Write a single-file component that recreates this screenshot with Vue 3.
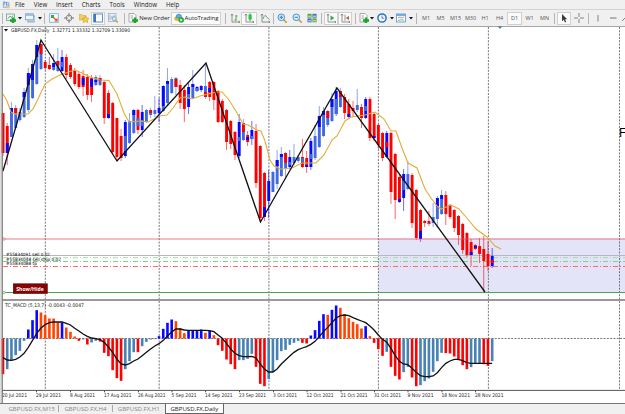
<script setup>
const STEP = 4.217
const ZERO = 338.5

const barX = (i) => 3 + i * STEP

const menus = ['File', 'View', 'Insert', 'Charts', 'Tools', 'Window', 'Help']

const axes = '<path d="M2 1V9H10M1 2.5L2 1L3 2.5M8.5 8L10 9L8.5 10" fill="none" stroke="#777" stroke-width=".8"/>'
const doc = '<path d="M1 .5H6L8 2.5V9H1Z" fill="#fff" stroke="#888" stroke-width=".7"/><path d="M2.5 3H5M2.5 5H5" stroke="#777" stroke-width=".7"/>'
const plus = '<path d="M7 4.5V10.5M4 7.5H10" stroke="#17a52b" stroke-width="2.4"/>'
const lens = '<path d="M6.5 6.5L9.8 9.8" stroke="#d1a139" stroke-width="1.7"/><circle cx="4.3" cy="4.3" r="3.3" fill="#d6edfb" stroke="#4a91cb"/>'

const icons = {
  newChart: '<rect x=".5" y="1" width="8" height="6.5" fill="#eaf3ee" stroke="#719e94" stroke-width=".8"/><path d="M2 5.5L4 3L5.5 4.5L7 2.5" fill="none" stroke="#499f55" stroke-width=".8"/>' + plus,
  profiles: '<rect x="2.8" y="3" width="7.5" height="6" fill="#b8d3eb" stroke="#7297b9" stroke-width=".7"/><rect x=".6" y=".8" width="7.8" height="6" fill="#edf5fc" stroke="#7297b9" stroke-width=".7"/><path d="M1 2H8" stroke="#75a7d5" stroke-width="1.3"/>',
  market: '<rect x=".7" y=".7" width="8.6" height="8.6" fill="#f8fcff" stroke="#75b8da" stroke-width=".9"/><path d="M2 2H5V5H2Z" fill="#3baa46"/><path d="M4 4L8 8M5.5 8H8V5.5" stroke="#e2592d" fill="none" stroke-width="1.2"/>',
  target: '<circle cx="5" cy="5" r="2.9" fill="none" stroke="#8b8b8b"/><path d="M5 0V3.8M5 6.2V10M0 5H3.8M6.2 5H10" stroke="#777"/>',
  navigator: '<path d="M0 1.5H3L4 2.5H7V7H0Z" fill="#f2ce62" stroke="#c79c30" stroke-width=".5"/><path d="M6.5 3L7.5 5.2L10 5.5L8.2 7.1L8.8 9.6L6.5 8.4L4.2 9.6L4.8 7.1L3 5.5L5.5 5.2Z" fill="#f8d32d" stroke="#bd9128" stroke-width=".5"/>',
  terminal: '<rect x=".7" y="1" width="8.8" height="8" fill="#fff" stroke="#4985c6" stroke-width=".9"/><rect x=".7" y="1" width="2.3" height="8" fill="#3c79c1"/><path d="M4 3H8M4 5H7" stroke="#ddd" stroke-width=".5"/>',
  tester: '<rect x=".5" y=".5" width="7.5" height="8" fill="#e8f0f7" stroke="#91a9bf" stroke-width=".7"/><path d="M2 2V7M4 3V6M6 2V5" stroke="#7799bb" stroke-width=".7"/><circle cx="6.2" cy="5.7" r="2" fill="#d3e9f7" stroke="#7895ab" stroke-width=".7"/><path d="M7.7 7.3L9.8 9.6" stroke="#c69f47" stroke-width="1.3"/>',
  order: doc + plus,
  auto: '<ellipse cx="4.6" cy="5.8" rx="4.4" ry="2.2" fill="#e8b62b"/><path d="M1.8 5Q1.8 1 4.8 1Q7.8 1 7.8 5Z" fill="#58aee0" stroke="#3786b5" stroke-width=".5"/><circle cx="7.2" cy="7" r="2.8" fill="#28a53a"/><path d="M6.3 5.5L8.8 7L6.3 8.5Z" fill="#fff"/>',
  bars: axes + '<path d="M6 2V8M6 3H7.5M4.5 7H6" stroke="#37a54b" stroke-width=".9" fill="none"/>',
  candles: axes + '<path d="M6 .3V8.2" stroke="#178c2c" stroke-width=".8"/><rect x="4.5" y="1.5" width="3.2" height="5" fill="#20c83a"/>',
  line: axes + '<path d="M3 6Q5 0 6.5 4L9.5 6.5" stroke="#57a566" stroke-width=".9" fill="none"/>',
  zoomIn: lens + '<path d="M4.3 2.6V6M2.6 4.3H6" stroke="#347dbb"/>',
  zoomOut: lens + '<path d="M2.6 4.3H6" stroke="#347dbb"/>',
  tile: '<path d="M.5 .8H4.6V4.7H.5Z" fill="#55a642"/><path d="M5.4 .8H9.6V4.7H5.4Z" fill="#4373bd"/><path d="M.5 5.4H4.6V9.3H.5Z" fill="#4373bd"/><path d="M5.4 5.4H9.6V9.3H5.4Z" fill="#55a642"/><path d="M1.2 3.2H4M6 3.2H9M1.2 7.8H4M6 7.8H9" stroke="#dcecd4"/>',
  scroll: axes + '<path d="M4.5 2.5L8.5 5L4.5 7.5Z" fill="#36ad49"/>',
  shift: axes + '<path d="M5 1.5V8" stroke="#6689a7" stroke-width=".8"/><path d="M9 3L5.7 5L9 7Z" fill="#c75936"/>',
  indicators: doc + plus,
  clock: '<circle cx="5" cy="5" r="4.1" fill="#f2f8ff" stroke="#2674be" stroke-width="1.5"/><path d="M5 2.5V5.2H7.2" stroke="#456" fill="none" stroke-width=".7"/>',
  template: '<rect x=".5" y="1" width="9" height="8" fill="#f6fbff" stroke="#5b95c9" stroke-width=".8"/><path d="M.5 2H9.5" stroke="#5b9ed9" stroke-width="1.6"/><path d="M2 5L4 4L6 5L8 3.8" stroke="#c26b4b" fill="none" stroke-width=".7"/><path d="M2 7.5L5 6.8L8 7.2" stroke="#52a15d" fill="none" stroke-width=".7"/>',
  cursor: '<path d="M3 1V8.2L4.7 6.8L6 9.4L7.2 8.8L6 6.3H8.2Z" fill="#3c3c3c"/>',
  cross: '<path d="M5 0V4M5 6V10M0 5H4M6 5H10" stroke="#777" stroke-width=".9"/>',
  vline: '<path d="M5 2V8.5" stroke="#777" stroke-width=".9"/>',
  hline: '<path d="M2 5H8.5" stroke="#666" stroke-width=".9"/>',
  trend: '<path d="M3 8L9 2" stroke="#777" stroke-width=".9"/>',
  caret: '<path d="M3 4H7L5 6.4Z" fill="#111"/>'
}

const icon = (name, w, on = false) => ({ type: 'icon', name, w, on })
const sep = (w) => ({ type: 'sep', w })
const period = (label, w, on = false) => ({ type: 'period', label, w, on })

const tools = [
  sep(4), icon('newChart', 13), icon('caret', 5), icon('profiles', 15), icon('caret', 5), sep(4),
  icon('market', 15), icon('target', 15), icon('navigator', 15), icon('terminal', 14, true), icon('tester', 16), sep(6),
  { type: 'button', name: 'order', label: 'New Order', w: 44 },
  { type: 'button', name: 'auto', label: 'AutoTrading', w: 50, on: true },
  sep(8), icon('bars', 12), icon('candles', 16, true), icon('line', 15), sep(3),
  icon('zoomIn', 14), icon('zoomOut', 16), icon('tile', 14), sep(5),
  icon('scroll', 14, true), icon('shift', 14, true), sep(7),
  icon('indicators', 10), icon('caret', 6), icon('clock', 14), icon('caret', 5), icon('template', 14), icon('caret', 6), sep(5),
  period('M1', 14), period('M5', 15), period('M15', 15), period('M30', 15), period('H1', 14),
  period('H4', 15), period('D1', 15, true), period('W1', 15), period('MN', 15), sep(5),
  icon('cursor', 14, true), icon('cross', 16), sep(3), icon('vline', 16), icon('hline', 14), icon('trend', 8)
]

const tabs = ['GBPUSD.FX,M15', 'GBPUSD.FX,H4', 'GBPUSD.FX,H1', 'GBPUSD.FX,Daily']

const colors = { r: '#ff0000', b: '#0808ff', s: '#4169e1', o: '#ff4500', t: '#4682b4' }

// color, wick top, body top, body bottom, wick bottom, then an optional patch (color, top, bottom)
const candles = `r 113 113 153 156|r 123 126 153 165 b 143 153|s 102 108 137 137 b 108 113|s 105 108 128 129 r 108 113|s 108 112 120 122
s 88 92 117 118 b 92 97|s 68 73 110 112 b 73 85|s 60 64 98 99 b 64 80|s 40 45 84 85 b 45 57|s 40 44 69 70 r 44 54
r 60 62 68 70|r 57 65 69 70|s 54 63 70 71 b 63 67|s 48 61 71 72 r 61 65|b 50 57 71 72 s 62 67
r 54 57 75 79|r 63 65 77 79|r 68 71 84 86|r 72 74 87 89|r 70 76 87 96 b 78 85
r 74 77 95 100|r 75 78 95 102 b 79 87|s 75 77 85 86 b 80 82|s 75 78 85 86 r 78 81|r 81 82 118 124
r 90 93 118 119 b 114 118|r 102 103 152 154|r 118 118 157 160|r 129 136 158 161|b 120 122 156 158 s 136 151
s 113 121 143 144|s 109 110 133 134 b 110 115|r 109 110 130 134 s 118 126|b 105 112 130 137 s 120 126|s 109 110 122 123
s 108 110 115 118 r 110 113|s 96 110 114 117|b 98 108 113 122|s 85 86 111 112 b 86 106|s 68 81 103 105 b 81 84
s 77 79 93 94|s 77 78 87 95 r 79 87|r 80 85 103 109|r 85 90 109 122|b 83 87 107 114 s 94 99
s 70 84 98 99 b 84 87|b 86 87 91 92 s 88 91|b 85 86 90 92|s 65 86 97 99 r 92 97|r 81 82 97 101 b 88 92
r 81 82 100 110|r 90 91 122 123|r 99 101 122 123|r 109 110 142 150|r 120 121 144 149
r 131 132 155 160|b 114 122 156 158 s 137 141|s 119 123 140 141 r 123 132|r 131 135 142 146 b 137 140|b 121 130 139 145 s 136 139
r 124 131 183 188|r 145 146 218 222|r 172 173 217 221 b 207 217|b 170 181 201 218|s 171 172 192 192
s 150 160 184 189 b 160 166|s 147 154 176 177 b 154 157|s 152 153 169 178 r 153 163|b 150 157 167 169 s 162 165|s 144 157 163 165
s 155 157 161 163|r 139 157 167 168 s 158 162|r 151 158 167 173 b 165 167|b 138 141 167 170 s 154 159|s 125 136 158 160
s 106 116 147 148 b 116 127|s 107 111 136 137 b 111 115|s 110 111 125 127 r 111 118|s 93 99 121 122 b 99 107|b 87 91 114 116 s 99 114
s 88 91 107 108 r 91 97|r 94 97 113 119|r 99 104 117 119 b 114 117|r 101 108 111 117|s 89 105 110 112
r 104 107 118 128|b 97 99 118 119 s 106 111|r 97 99 138 141|r 112 114 138 141 b 136 138|r 124 125 145 149
r 132 133 158 161|b 131 133 157 158 r 142 147|r 132 133 192 204|r 153 154 200 219|r 174 177 202 203 b 199 202
b 169 174 198 211 s 181 190|s 161 174 189 190|r 173 175 223 228|r 189 190 238 240|r 209 210 239 242 b 231 239
r 220 221 223 227|r 211 221 224 226 s 223 224|s 203 217 223 227|s 196 198 219 228 b 198 207|s 190 195 214 215 b 195 199
r 191 195 214 225|r 204 205 217 219|r 209 210 228 232|r 215 216 235 245|r 223 224 250 254
r 232 233 255 257|r 239 242 255 266 b 252 255|r 244 245 249 250 b 246 248|r 238 246 254 263|r 236 249 261 292
r 241 254 266 271|b 248 256 266 268 r 260 263`
  .split(/[|\n]/)
  .map((row, i) => {
    const [color, high, top, bottom, low, patch, patchTop, patchBottom] = row.trim().split(' ')
    return { x: barX(i), color: colors[color], high, top, low, h: bottom - top, patch: colors[patch], patchTop, patchH: patchBottom - patchTop }
  })

const macd = `r-107 t-92 t-65 t-50 t-37 t-7 b27 b55 b85 o78 o70 o60 o60 o48 b49 o33 o20 o6 r-7 t-3 r-18 t-12 t-7 r-9 r-43 r-53 r-95 r-119 r-127 t-92 t-68 t-41 r-41 t-23 t-10 t-3 t-2
b7 b29 b47 b57 o52 o31 o16 b25 b25 b25 b27 o17 b23 o10 r-20 r-37 r-63 r-77 r-92 t-65 t-65 t-61 t-46 r-85 r-136 r-143 t-122 t-101 t-65 t-38 t-34 t-19 t-13 t-7 r-13 r-15
b9 b25 b53 b73 o71 b86 b99 o92 o73 o61 o50 o43 o30 b37 o7 r-13 r-32 r-52 t-40 r-85 r-112 r-123 t-101 t-85 r-117 r-143 t-140 t-128 t-120 t-100 t-68 t-43 r-44 r-45 r-54 r-65 r-80 r-92 t-86 t-75 t-75 r-77 r-82 t-68`
  .split(/\s+/)
  .map((item, i) => {
    const h = Number(item.slice(1)) / 3
    return { x: barX(i), y: h > 0 ? ZERO - h : ZERO, h: Math.abs(h), color: colors[item[0]] }
  })

const signal = [
  173, 180, 181, 178, 171, 160, 142, 121, 100, 84, 74, 68, 66, 66, 66, 70, 75, 85, 93, 102, 109, 114, 116, 119, 127, 141, 157, 177, 192, 195,
  191, 183, 177, 167, 157, 147, 138, 131, 121, 108, 96, 87, 87, 90, 91, 91, 91, 91, 91, 92, 95, 105, 115, 130, 147, 160, 167, 170, 170, 169,
  174, 192, 207, 216, 216, 207, 192, 180, 168, 157, 149, 144, 140, 133, 124, 110, 95, 82, 68, 54, 47, 45, 47, 53, 58, 63, 68, 78, 90, 105,
  118, 127, 145, 167, 184, 192, 194, 205, 217, 227, 230, 230, 228, 218, 203, 190, 183, 178, 178, 182, 188, 190, 190, 190, 190, 190, 190
].map((v, i) => `${barX(i)},${300 + v / 3}`).join(' ')

const average = '3,94 7,101 11,112 15,114 28,114 33,109 38,99 45,84 52,79 60,75 70,71.5 75,70 82,73 90,77 100,80 109,80.5 117,94 124,113 129,122 141,121 148,122 154,119 159,116 167,115 173,108 180,98 185,97 192,99 200,96 208,94 217,92 222,92 229,100 237,113 243,124 248,125 257,130 261,131 265,141 270,160 274,166 280,169 292,168 302,163 316,163 324,155 332,140 337,136 345,121 351,117 365,115 375,112 384,119 391,131 396,131 402,148 408,163 417,168 425,189 431,198 437,206 441,209 451,205 459,209 466,217 476,229 487,237 495,246 501,249'
const zigzag = '3,171 41,40 117,161 206,63 260.5,222 337,88 485,292'

const separators = [45.3, 159.2, 268.9, 378.4, 488.4, 619.5]

const dates = [
  ['20 Jul 2021', 2, 25], ['29 Jul 2021', 36, 25], ['8 Aug 2021', 70, 25], ['17 Aug 2021', 104, 27.5], ['26 Aug 2021', 138, 27.5],
  ['5 Sep 2021', 171.5, 25], ['14 Sep 2021', 205, 27.5], ['23 Sep 2021', 239, 27], ['3 Oct 2021', 273, 24], ['12 Oct 2021', 306.5, 27],
  ['21 Oct 2021', 340.5, 27], ['31 Oct 2021', 374, 27], ['9 Nov 2021', 407.5, 26], ['18 Nov 2021', 441.5, 28.5], ['28 Nov 2021', 475, 28.5]
]
</script>

<template>
  <div class="terminal">
    <nav class="menu">
      <svg class="logo" viewBox="0 0 10 10">
        <path d="M1 2H8V8H1Z" fill="#d7e8f7" stroke="#78a8d5" />
        <path d="M2 0V5M5 1V6M7 4V9" stroke="#4f8fcc" />
        <path d="M5 6H9V9H5Z" fill="#f0c96d" />
      </svg>
      <span v-for="m in menus" :key="m">{{ m }}</span>
    </nav>

    <div class="toolbar">
      <div v-for="(t, i) in tools" :key="i" class="tool" :class="[t.type, { on: t.on }]" :style="{ width: t.w + 'px' }">
        <svg v-if="t.name" class="glyph" viewBox="0 0 10 10" v-html="icons[t.name]"></svg>
        <span v-if="t.label">{{ t.label }}</span>
      </div>
    </div>

    <svg class="chart" viewBox="0 26 625 377">
      <rect x="0" y="26" width="625" height="377" fill="#fff" />
      <rect x="378.5" y="238.5" width="247" height="54" fill="#e4e4f8" />

      <path v-for="x in separators" :key="x" :d="`M${x} 27V299M${x} 301V389`" class="dash" />

      <path d="M3 255.5H625" stroke="#b4b8c4" />
      <path d="M3 257.7H625" stroke="#a3dda5" stroke-dasharray="5 2 1 2" />
      <path d="M3 261.5H625" stroke="#86cf88" stroke-dasharray="5 2 1 2" />
      <path d="M3 266.5H625" stroke="#ff6868" stroke-dasharray="5 2 1 2" />
      <path d="M3 292.5H625" stroke="#4ba653" />

      <g v-for="c in candles" :key="c.x">
        <path :d="`M${c.x} ${c.high}V${c.low}`" :stroke="c.color" stroke-opacity=".6" />
        <rect :x="c.x - 1.4" :y="c.top" width="2.9" :height="c.h" :fill="c.color" />
        <rect v-if="c.patch" :x="c.x - 1.4" :y="c.patchTop" width="2.9" :height="c.patchH" :fill="c.patch" />
      </g>
      <path d="M3 239H625" stroke="#e2506c" stroke-opacity=".75" />
      <polyline :points="average" fill="none" stroke="#dfae38" stroke-width="1.1" />
      <polyline :points="zigzag" fill="none" stroke="#111" stroke-width="1.3" />

      <circle cx="4" cy="239" r="1.2" fill="#fff" stroke="#e2506c" stroke-width=".7" />
      <circle cx="4" cy="292.5" r="1.2" fill="#fff" stroke="#4ba653" stroke-width=".7" />
      <path d="M4 29H8L6 31.5Z" />
      <path d="M497.5 26H502.5L500 29Z" fill="#5e7590" />
      <text x="11" y="32.4" textLength="119" lengthAdjust="spacingAndGlyphs" class="label">GBPUSD.FX,Daily&#160; 1.32771 1.33332 1.32709 1.33090</text>
      <text x="6" y="256.4" textLength="44" lengthAdjust="spacingAndGlyphs" class="label order">#55834091 sell 0.02</text>
      <text x="6" y="260.6" textLength="55" lengthAdjust="spacingAndGlyphs" class="label order">#55834048 sell stop 0.02</text>
      <text x="6" y="264.8" textLength="31" lengthAdjust="spacingAndGlyphs" class="label order">#55834088 tp</text>
      <text x="619" y="136.5" class="side">F</text>

      <rect x="13.3" y="283.8" width="34" height="9.7" fill="#8b0000" stroke="#3c0b0b" stroke-width=".6" />
      <text x="16.3" y="291.1" textLength="27.5" lengthAdjust="spacingAndGlyphs" class="toggle">Show/Hide</text>

      <path d="M2 300H625" stroke="#777" stroke-width="1.6" />
      <text x="5" y="307.4" textLength="79" lengthAdjust="spacingAndGlyphs" class="label">TC_MACD (5,13,7) -0.0043 -0.0047</text>
      <path :d="`M3 ${ZERO}H625`" class="dash" />
      <rect v-for="b in macd" :key="b.x" :x="b.x - 1.3" :y="b.y" width="2.6" :height="b.h" :fill="b.color" />
      <polyline :points="signal" fill="none" stroke="#111" stroke-width="1.3" />

      <path d="M2 390.4H625" stroke="#555" />
      <g v-for="d in dates" :key="d[0]">
        <path :d="`M${d[1] + .5} 390V392.3`" stroke="#555" />
        <text :x="d[1]" y="397.3" :textLength="d[2]" lengthAdjust="spacingAndGlyphs" class="label">{{ d[0] }}</text>
      </g>
      <path d="M0 26H625" stroke="#888" stroke-width="1.6" />
      <path d="M2.2 26V403" stroke="#777" stroke-width="1.3" />
      <path d="M.5 26V403" stroke="#ddd" />
    </svg>

    <div class="tabs">
      <span v-for="t in tabs" :key="t" class="tab" :class="{ active: t === 'GBPUSD.FX,Daily' }">{{ t }}</span>
    </div>
  </div>
</template>

<style>
body {
  margin: 0;
  overflow: hidden;
}
</style>

<style scoped>
.terminal {
  width: 625px;
  height: 414px;
  display: flex;
  flex-direction: column;
  overflow: hidden;
  background: #f0f0f0;
  font-family: 'Open Sans', 'Noto Sans', sans-serif;
  color: #222;
}
.menu {
  height: 9px;
  display: flex;
  align-items: center;
  gap: 8.9px;
  padding-left: 2px;
  font-size: 6.2px;
  line-height: 9px;
}
.logo {
  width: 9px;
  height: 8px;
  margin-right: -4.9px;
}
.toolbar {
  height: 17px;
  display: flex;
  align-items: center;
  border-top: 1px solid #d4d4d4;
  box-sizing: border-box;
  overflow: hidden;
}
.tool {
  height: 13px;
  flex: none;
  display: flex;
  align-items: center;
  justify-content: center;
  box-sizing: border-box;
}
.glyph {
  width: 10px;
  height: 10px;
  flex: none;
}
.on {
  background: #fafafa;
  border: 1px solid #d0d0d0;
}
.sep::after {
  content: '';
  width: 1px;
  height: 11px;
  background: #b5b5b5;
}
.button {
  gap: 1px;
  font-size: 6px;
  letter-spacing: -0.05px;
  white-space: nowrap;
}
.period {
  font-size: 5.5px;
  color: #555;
}
.chart {
  display: block;
  width: 625px;
  height: 377px;
  flex: none;
}
.dash {
  fill: none;
  stroke: #555;
  stroke-width: 0.8;
  stroke-dasharray: 2 1.3;
}
.label {
  font-family: 'DejaVu Sans', sans-serif;
  font-size: 5.1px;
  fill: #222;
}
.order {
  font-size: 4.4px;
  fill: #000;
}
.side {
  font: 12px 'Liberation Sans', sans-serif;
}
.toggle {
  font-size: 5.6px;
  font-weight: 700;
  fill: #fff;
}
.tabs {
  height: 11px;
  display: flex;
  box-sizing: border-box;
  border-top: 1px solid #777;
  padding-left: 5px;
  font-size: 6.1px;
  line-height: 9.5px;
}
.tab {
  height: 9px;
  width: 53.3px;
  text-align: center;
  color: #888;
  white-space: nowrap;
}
.tab + .tab:not(.active) {
  border-left: 1px solid #aaa;
  height: 7px;
  margin: 1px 0;
  line-height: 7.5px;
  box-sizing: border-box;
}
.active {
  width: 57px;
  background: #fff;
  color: #222;
  border: 1px solid #666;
  border-top: 0;
}
</style>
